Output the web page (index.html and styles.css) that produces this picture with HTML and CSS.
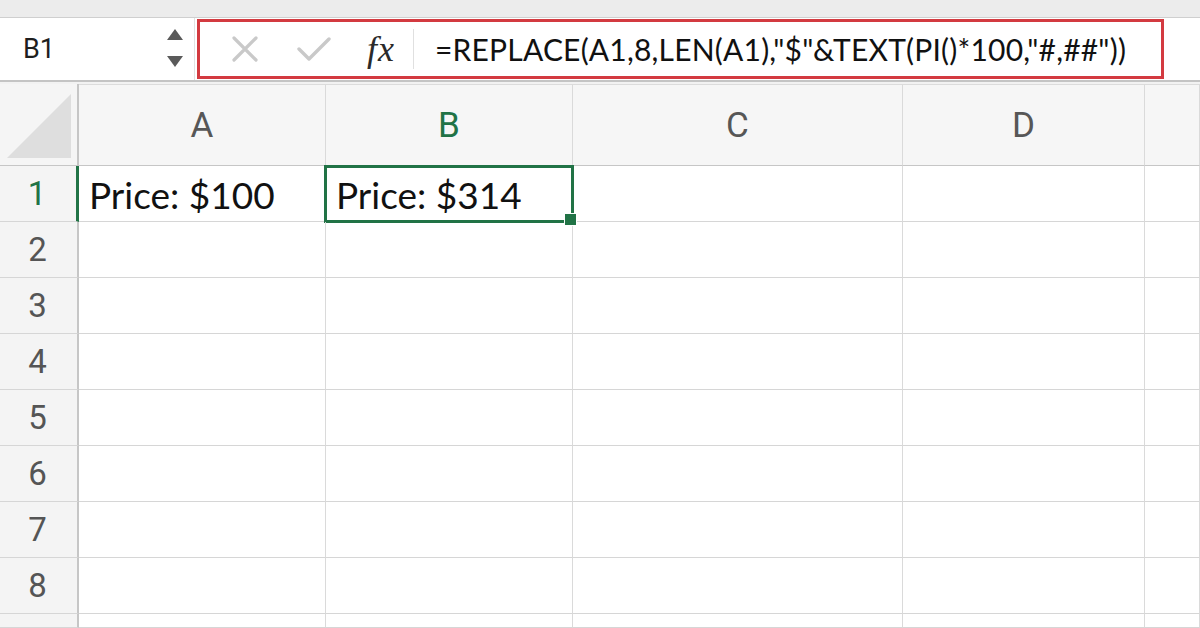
FILE: index.html
```html
<!DOCTYPE html>
<html lang="en">
  <head>
    <meta charset="UTF-8" />
    <title>REPLACE formula</title>
    <link rel="stylesheet" href="styles.css">
  </head>
  <body>
    <!-- toolbar strip -->
    <div class="topbar"></div>

    <!-- name box + formula bar -->
    <div class="formula-row">
      <div class="name-box">
        <span class="cell-ref">B1</span>
        <svg class="spinner" width="18" height="40" viewBox="0 0 18 40">
          <polygon points="9,0 17,11 1,11" fill="#5a5a5a" />
          <polygon points="1,27 17,27 9,38" fill="#5a5a5a" />
        </svg>
      </div>
      <div class="formula-bar">
        <svg class="icon-cancel" width="26" height="26" viewBox="0 0 26 26">
          <path d="M2 2 L24 24 M24 2 L2 24" stroke="#c9c9c9" stroke-width="3.2" stroke-linecap="round" />
        </svg>
        <svg class="icon-enter" width="34" height="24" viewBox="0 0 34 24">
          <path d="M2 12 L12 22 L32 2" stroke="#c9c9c9" stroke-width="3.4" fill="none" stroke-linecap="round" stroke-linejoin="round" />
        </svg>
        <span class="fx">fx</span>
        <div class="divider"></div>
        <span class="formula">=REPLACE(A1,8,LEN(A1),"$"&amp;TEXT(PI()*100,"#,##"))</span>
      </div>
    </div>
    <div class="spacer"></div>

    <!-- grid -->
    <div class="sheet">
      <div class="corner">
        <svg width="66" height="66" viewBox="0 0 66 66">
          <polygon points="64,0 64,64 0,64" fill="#dedede" />
        </svg>
      </div>
      <div class="col-head">A</div>
      <div class="col-head active">B</div>
      <div class="col-head">C</div>
      <div class="col-head">D</div>
      <div class="col-head"></div>

      <div class="row-head active">1</div>
      <div class="cell">Price: $100</div>
      <div class="cell selected">Price: $314<span class="handle"></span></div>
      <div class="cell"></div>
      <div class="cell"></div>
      <div class="cell"></div>

      <div class="row-head">2</div>
      <div class="cell"></div><div class="cell"></div><div class="cell"></div><div class="cell"></div><div class="cell"></div>
      <div class="row-head">3</div>
      <div class="cell"></div><div class="cell"></div><div class="cell"></div><div class="cell"></div><div class="cell"></div>
      <div class="row-head">4</div>
      <div class="cell"></div><div class="cell"></div><div class="cell"></div><div class="cell"></div><div class="cell"></div>
      <div class="row-head">5</div>
      <div class="cell"></div><div class="cell"></div><div class="cell"></div><div class="cell"></div><div class="cell"></div>
      <div class="row-head">6</div>
      <div class="cell"></div><div class="cell"></div><div class="cell"></div><div class="cell"></div><div class="cell"></div>
      <div class="row-head">7</div>
      <div class="cell"></div><div class="cell"></div><div class="cell"></div><div class="cell"></div><div class="cell"></div>
      <div class="row-head">8</div>
      <div class="cell"></div><div class="cell"></div><div class="cell"></div><div class="cell"></div><div class="cell"></div>
      <div class="row-head"></div>
      <div class="cell"></div><div class="cell"></div><div class="cell"></div><div class="cell"></div><div class="cell"></div>
    </div>
  </body>
</html>
```

FILE: styles.css
```css
/* page */
body {
  margin: 0;
  width: 1200px;
  height: 628px;
  overflow: hidden;
  background-color: #fff;
  font-family: Roboto, "Liberation Sans", sans-serif;
}

/* toolbar strip */
.topbar {
  height: 17px;
  background-color: #ececec;
  border-bottom: 1px solid #cfcfcf;
}

/* name box + formula bar */
.formula-row {
  display: flex;
  align-items: stretch;
  height: 62px;
  background-color: #fff;
  border-bottom: 2px solid #c4c4c4;
}

.name-box {
  width: 195px;
  display: flex;
  align-items: center;
  justify-content: space-between;
  padding: 0 10px 0 23px;
  box-sizing: border-box;
  border-right: 1px solid #e2e2e2;
}

.cell-ref {
  font-size: 27px;
  color: #1e1e1e;
}

.formula-bar {
  flex: 0 0 967px;
  margin: 1px 0 1px 2px;
  border: 3px solid #d33a40;
  box-sizing: border-box;
  display: flex;
  align-items: center;
}

.icon-cancel {
  margin-left: 32px;
}

.icon-enter {
  margin-left: 39px;
}

.fx {
  margin-left: 36px;
  font-family: "Liberation Serif", "DejaVu Serif", serif;
  font-style: italic;
  font-size: 36px;
  color: #2a2a2a;
  letter-spacing: 1px;
}

.divider {
  width: 1px;
  height: 40px;
  background-color: #e0e0e0;
  margin-left: 18px;
}

.formula {
  margin-left: 21px;
  font-family: Lato, "Liberation Sans", sans-serif;
  font-size: 30px;
  letter-spacing: 0.2px;
  color: #111;
  white-space: nowrap;
}

.spacer {
  height: 2px;
  background-color: #f2f2f2;
}

/* grid */
.sheet {
  display: grid;
  grid-template-columns: 79px 247px 247px 330px 242px 55px;
  grid-template-rows: 82px repeat(8, 56px) 14px;
  overflow: hidden;
}

.corner {
  background-color: #f5f5f5;
  border-right: 2px solid #c6c6c6;
  border-bottom: 1px solid #c6c6c6;
  box-sizing: border-box;
  display: flex;
  align-items: flex-end;
  justify-content: flex-end;
  padding: 0 4px 5px 0;
}

.col-head {
  background-color: #f6f6f6;
  border-right: 1px solid #dadada;
  border-bottom: 1px solid #c6c6c6;
  border-top: 1px solid #dcdcdc;
  box-sizing: border-box;
  display: flex;
  align-items: center;
  justify-content: center;
  font-size: 35px;
  color: #575757;
}

.col-head.active {
  color: #217346;
}

.row-head {
  background-color: #f4f4f4;
  border-right: 2px solid #c6c6c6;
  border-bottom: 1px solid #d6d6d6;
  box-sizing: border-box;
  display: flex;
  align-items: center;
  justify-content: center;
  padding-right: 2px;
  font-size: 33px;
  color: #555;
}

.row-head.active {
  color: #217346;
  border-right: 3px solid #217346;
}

.cell {
  border-right: 1px solid #dadada;
  border-bottom: 1px solid #d6d6d6;
  box-sizing: border-box;
  display: flex;
  align-items: center;
  padding: 2px 0 0 10px;
  font-family: Lato, "Liberation Sans", sans-serif;
  font-size: 37px;
  color: #111;
  white-space: nowrap;
  position: relative;
}

/* active cell outline */
.cell.selected::after {
  content: "";
  position: absolute;
  top: -1px;
  left: -2px;
  right: -2px;
  bottom: -2px;
  border: 3px solid #217346;
}

.handle {
  position: absolute;
  right: -5px;
  bottom: -5px;
  width: 11px;
  height: 11px;
  background-color: #217346;
  border: 1px solid #fff;
  z-index: 1;
}
```
